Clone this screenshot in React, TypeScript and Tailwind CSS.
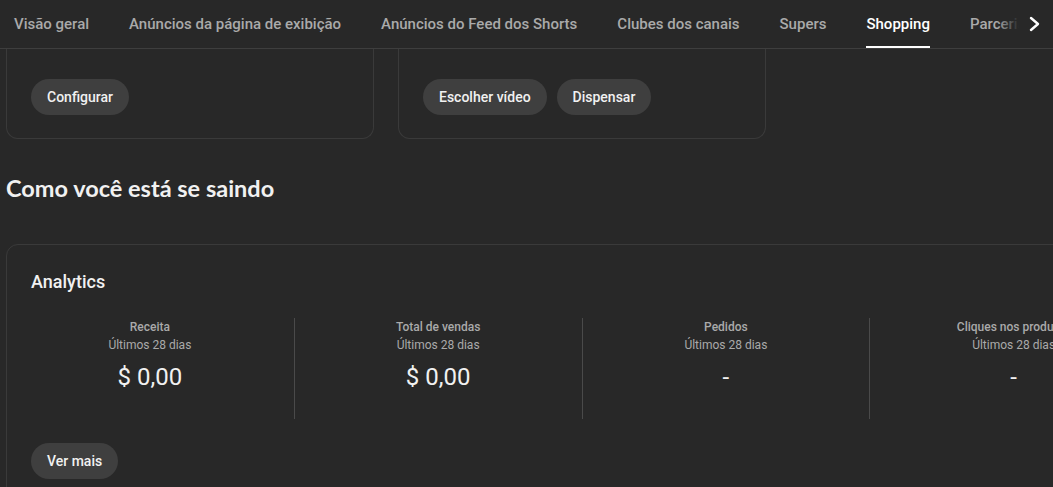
import React from 'react';

const tabs = [
  'Visão geral',
  'Anúncios da página de exibição',
  'Anúncios do Feed dos Shorts',
  'Clubes dos canais',
  'Supers',
  'Shopping',
  'Parcerias de marca',
];

const stats = [
  { label: 'Receita', value: '$ 0,00' },
  { label: 'Total de vendas', value: '$ 0,00' },
  { label: 'Pedidos', value: '-' },
  { label: 'Cliques nos produtos', value: '-' },
];

const Pill: React.FC<{ children: React.ReactNode }> = ({ children }) => (
  <button className="h-9 px-4 rounded-full bg-[#3f3f3f] text-[14px] font-medium text-[#f1f1f1] leading-9">
    {children}
  </button>
);

export default function App() {
  return (
    <div
      className="w-[1053px] h-[487px] overflow-hidden bg-[#282828] text-white"
      style={{ fontFamily: 'Roboto, "Liberation Sans", sans-serif' }}
    >
      {/* Tabs */}
      <div className="relative h-[49px] border-b border-[#3e3e3e] flex pl-[14px] gap-10 overflow-hidden whitespace-nowrap">
        {tabs.map((t) => {
          const active = t === 'Shopping';
          return (
            <div key={t} className="relative h-12 flex items-center shrink-0">
              <span className={`text-[15px] font-medium ${active ? 'text-white' : 'text-[#aaaaaa]'}`}>{t}</span>
              {active && <div className="absolute left-0 right-0 bottom-0 h-[2px] bg-white" />}
            </div>
          );
        })}
        <div className="absolute right-0 top-0 h-12 w-[56px] flex items-center">
          <div className="h-full w-[22px] bg-gradient-to-r from-transparent to-[#282828]" />
          <div className="h-full flex-1 bg-[#282828] flex items-center pl-[4px]">
            <svg width="24" height="24" viewBox="0 0 24 24" fill="none" stroke="white" strokeWidth={2.4} strokeLinecap="round" strokeLinejoin="round">
              <path d="M8 6l7 6-7 6" />
            </svg>
          </div>
        </div>
      </div>

      {/* Cards above (scrolled) */}
      <div className="flex gap-6 pl-[6px]">
        <div className="w-[368px] border border-t-0 border-[#3a3a3a] rounded-b-xl px-6 pt-[30px] pb-[23px]">
          <Pill>Configurar</Pill>
        </div>
        <div className="w-[368px] border border-t-0 border-[#3a3a3a] rounded-b-xl px-6 pt-[30px] pb-[23px] flex gap-2.5">
          <Pill>Escolher vídeo</Pill>
          <Pill>Dispensar</Pill>
        </div>
      </div>

      <h2
        className="pl-[6px] mt-[33px] text-[23.5px] leading-8 font-bold text-[#f1f1f1]"
        style={{ fontFamily: 'Lato, "Noto Sans", sans-serif' }}
      >
        Como você está se saindo
      </h2>

      {/* Analytics card */}
      <div className="ml-[6px] mt-10 w-[1152px] border border-[#3a3a3a] rounded-xl pt-6">
        <div className="pl-6 text-[18px] leading-7 font-medium text-[#f1f1f1] -mt-px">Analytics</div>
        <div className="grid grid-cols-4 mt-[22px] -ml-px">
          {stats.map((s, i) => (
            <div
              key={s.label}
              className={`h-[101px] flex flex-col items-center text-center whitespace-nowrap ${i > 0 ? 'border-l border-[#4a4a4a]' : ''}`}
            >
              <div className="text-[12px] leading-[18px] font-medium text-[#aaaaaa]">{s.label}</div>
              <div className="text-[12px] leading-[18px] text-[#aaaaaa]">Últimos 28 dias</div>
              <div className="mt-[7px] text-[24px] leading-8 text-[#f1f1f1]">{s.value}</div>
            </div>
          ))}
        </div>
        <div className="pl-6 mt-[24px] pb-6">
          <Pill>Ver mais</Pill>
        </div>
      </div>
    </div>
  );
}
